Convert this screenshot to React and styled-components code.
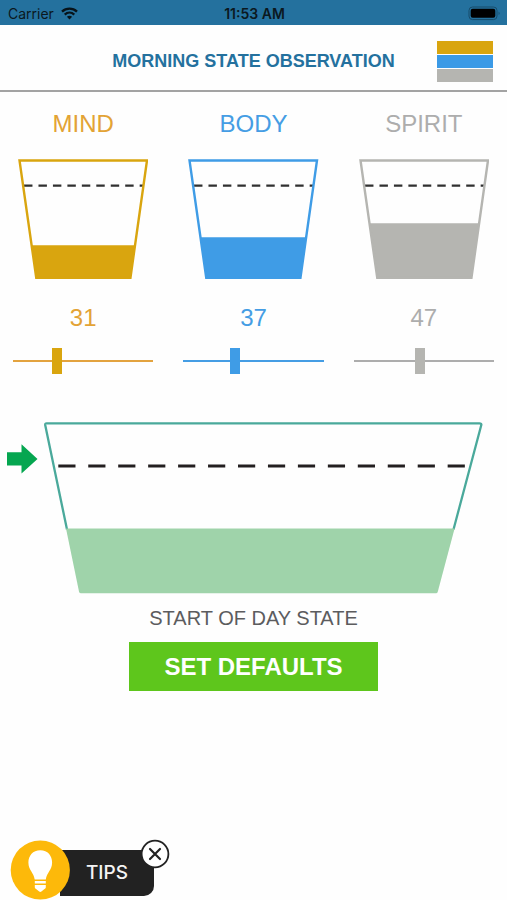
import React, { useState } from "react";
import styled, { createGlobalStyle } from "styled-components";

const GlobalStyle = createGlobalStyle`
  *, *::before, *::after { box-sizing: border-box; }
  body {
    margin: 0;
    background: #fefefe;
    font-family: "Liberation Sans", Arial, sans-serif;
  }
  button { font: inherit; border: 0; padding: 0; cursor: pointer; }
  svg { display: block; }
`;

const Screen = styled.div`
  display: flex;
  flex-direction: column;
  min-height: 100vh;
`;

const StatusBar = styled.div`
  display: grid;
  grid-template-columns: 1fr auto 1fr;
  align-items: center;
  height: 25px;
  padding: 2px 6px 0 8px;
  background: #24719e;
  color: #0b1820;
  font: 400 14px/16px Inter, sans-serif;
`;

const Carrier = styled.span`
  display: flex;
  align-items: center;
  gap: 7px;
`;

const Clock = styled.time`
  font-weight: 600;
`;

const Battery = styled.svg`
  justify-self: end;
`;

const Header = styled.header`
  display: grid;
  grid-template-columns: 56px 1fr 56px;
  align-items: center;
  height: 67px;
  padding: 7px 14px 0 14px;
  border-bottom: 2px solid #a3a3a3;
`;

const Title = styled.h1`
  margin: 0;
  color: #24719e;
  font-size: 18px;
  line-height: 24px;
  font-weight: 700;
  text-align: center;
  white-space: nowrap;
`;

const MenuButton = styled.button`
  display: grid;
  gap: 1px;
  background: none;
`;

const MenuBar = styled.span`
  height: 13px;
  background: ${(p) => p.$color};
`;

const Gauges = styled.section`
  display: grid;
  grid-template-columns: repeat(3, 1fr);
  gap: 30px;
  padding: 16px 13px 0;
`;

const Gauge = styled.div`
  display: flex;
  flex-direction: column;
  align-items: center;
  color: ${(p) => p.$color};
`;

const GaugeLabel = styled.label`
  font-size: 24px;
  line-height: 32px;
`;

const GaugeCup = styled.svg`
  width: 93%;
  margin: 19px 0 23px;
`;

const GaugeValue = styled.output`
  font-size: 24px;
  line-height: 32px;
`;

const Slider = styled.input`
  appearance: none;
  width: calc(100% + 10px);
  height: 26px;
  margin: 14px -5px 0;
  background: linear-gradient(${(p) => p.$track}, ${(p) => p.$track}) center / calc(100% - 10px) 2px no-repeat;
  cursor: pointer;

  &::-webkit-slider-thumb {
    appearance: none;
    width: 10px;
    height: 26px;
    background: ${(p) => p.$thumb};
  }
`;

const DayState = styled.section`
  display: flex;
  flex-direction: column;
  align-items: center;
  padding-top: 48px;
`;

const DayRow = styled.div`
  display: flex;
  align-items: flex-start;
  gap: 6px;
  width: 100%;
  padding: 0 24px 0 7px;
`;

const Arrow = styled.svg`
  flex: none;
  margin-top: 22px;
`;

const DayCup = styled.svg`
  flex: 1;
  min-width: 0;
`;

const DayLabel = styled.p`
  margin: 12px 0;
  color: #5c5c5e;
  font-size: 20px;
  line-height: 24px;
`;

const DefaultsButton = styled.button`
  && {
    padding: 0 35px;
    background: #5ec61c;
    color: #fff;
    font-size: 24px;
    line-height: 49px;
    font-weight: 700;
    white-space: nowrap;
  }
`;

const Tips = styled.aside`
  display: flex;
  align-items: flex-start;
  margin-top: auto;
  padding: 0 10px;
`;

const Bulb = styled.svg`
  position: relative;
  z-index: 1;
`;

const TipsButton = styled.button`
  && {
    width: 94px;
    height: 46px;
    margin: 11px 0 0 -10px;
    border-radius: 0 10px 10px 0;
    background: #222;
    color: #f4f4f4;
    font: 500 19px/46px Inter, sans-serif;
  }
`;

const CloseButton = styled.button`
  position: relative;
  width: 30px;
  height: 30px;
  margin-left: -14px;
  border-radius: 50%;
  background: none;
`;

const gauges = [
  { name: "MIND", initial: 31, text: "#e3a335", fill: "#d9a50f", track: "#e3a33f", level: 86 },
  { name: "BODY", initial: 37, text: "#459de4", fill: "#3f9ce6", track: "#459de4", level: 78 },
  { name: "SPIRIT", initial: 47, text: "#adadad", fill: "#b5b5b1", track: "#adadad", level: 64 },
];

function CupGauge({ gauge }) {
  const [value, setValue] = useState(gauge.initial);
  const id = gauge.name.toLowerCase();
  const level = gauge.level - (value - gauge.initial) * 1.2;
  const inset = (level - 1) * 0.142;
  return (
    <Gauge $color={gauge.text}>
      <GaugeLabel htmlFor={id}>{gauge.name}</GaugeLabel>
      <GaugeCup viewBox="0 0 130 120" aria-hidden="true">
        <path d="M6 26.5H125" stroke="#303030" strokeWidth="2.4" strokeDasharray="8.4 6" />
        <path
          d={`M${1.5 + inset} ${level}H${128.5 - inset}L112.2 119.5H18Z`}
          fill={gauge.fill}
        />
        <path d="M1.5 1.5H128.5L112 118.5H18.2Z" fill="none" stroke={gauge.fill} strokeWidth="2.4" />
      </GaugeCup>
      <GaugeValue htmlFor={id}>{value}</GaugeValue>
      <Slider
        id={id}
        type="range"
        min="0"
        max="100"
        value={value}
        onChange={(e) => setValue(Number(e.target.value))}
        $track={gauge.track}
        $thumb={gauge.fill}
      />
    </Gauge>
  );
}

export default function App() {
  return (
    <Screen>
      <GlobalStyle />
      <StatusBar>
        <Carrier>
          Carrier
          <svg width="17" height="13" viewBox="0 0 17 13" fill="none" stroke="#07131a" aria-hidden="true">
            <path d="M1 4.7C5.2.7 11.8.7 16 4.7" strokeWidth="2.3" />
            <path d="M3.7 7.6C6.5 5 10.5 5 13.3 7.6" strokeWidth="2.2" />
            <path d="M5.9 9.8Q8.5 7.5 11.1 9.8L8.5 12.5Z" fill="#07131a" stroke="none" />
          </svg>
        </Carrier>
        <Clock>11:53 AM</Clock>
        <Battery width="33" height="15" viewBox="0 0 33 15" aria-hidden="true">
          <rect x="1" y="1" width="28" height="12.6" rx="3.5" fill="none" stroke="#174c6b" />
          <rect x="2.7" y="2.8" width="24.6" height="9" rx="2" fill="#000" />
          <path d="M30.6 5.4Q32.6 7.2 30.6 9Z" fill="#174c6b" />
        </Battery>
      </StatusBar>
      <Header>
        <span />
        <Title>MORNING STATE OBSERVATION</Title>
        <MenuButton aria-label="Menu">
          <MenuBar $color="#d9a50f" />
          <MenuBar $color="#3b9ae6" />
          <MenuBar $color="#b5b5b1" />
        </MenuButton>
      </Header>
      <Gauges>
        {gauges.map((gauge) => (
          <CupGauge key={gauge.name} gauge={gauge} />
        ))}
      </Gauges>
      <DayState>
        <DayRow>
          <Arrow width="31" height="30" viewBox="0 0 31 30" aria-hidden="true">
            <path d="M0 8.3H14.5V.3L30.5 15L14.5 29.6V21.5H0Z" fill="#05a650" />
          </Arrow>
          <DayCup viewBox="0 0 439 172" fill="none" aria-hidden="true">
            <path
              d="M23 107.5L1.2 3Q1 1.4 2.6 1.4H435.5Q437.7 1.4 437.3 3L409.5 107.5"
              stroke="#4aa99b"
              strokeWidth="2.3"
            />
            <path d="M22 106.5H410.6L393.7 170Q393.3 171.3 392 171.3H37Q35.4 171.3 35.1 170Z" fill="#9fd3aa" />
            <path d="M14.3 44H421" stroke="#231f20" strokeWidth="3" strokeDasharray="17.2 12.75" />
          </DayCup>
        </DayRow>
        <DayLabel>START OF DAY STATE</DayLabel>
        <DefaultsButton>SET DEFAULTS</DefaultsButton>
      </DayState>
      <Tips>
        <Bulb width="60" height="61" viewBox="0 0 60 61" aria-hidden="true">
          <circle cx="30.3" cy="31" r="29.6" fill="#fdb90a" />
          <path
            d="M30.3 11.2C22.8 11.2 18.4 16.8 18.4 23.4C18.4 31 23.9 33.5 24.7 40.6H35.8C36.6 33.5 42.1 31 42.1 23.4C42.1 16.8 37.8 11.2 30.3 11.2Z"
            fill="#fff"
          />
          <path
            d="M24.8 42H35.8V44.5H24.8ZM24.8 46H35.8V48.6Q35.6 49.6 34.2 50.2L31.4 52.6Q30.3 53.3 29.2 52.6L26.4 50.2Q25 49.6 24.8 48.6Z"
            fill="#fff"
          />
        </Bulb>
        <TipsButton>TIPS</TipsButton>
        <CloseButton aria-label="Close tips">
          <svg width="30" height="30" viewBox="0 0 30 30" aria-hidden="true">
            <circle cx="15" cy="15" r="13.4" fill="#fff" stroke="#222" strokeWidth="1.8" />
            <path d="M10 10L20 20M20 10L10 20" stroke="#222" strokeWidth="2.2" strokeLinecap="round" />
          </svg>
        </CloseButton>
      </Tips>
    </Screen>
  );
}
